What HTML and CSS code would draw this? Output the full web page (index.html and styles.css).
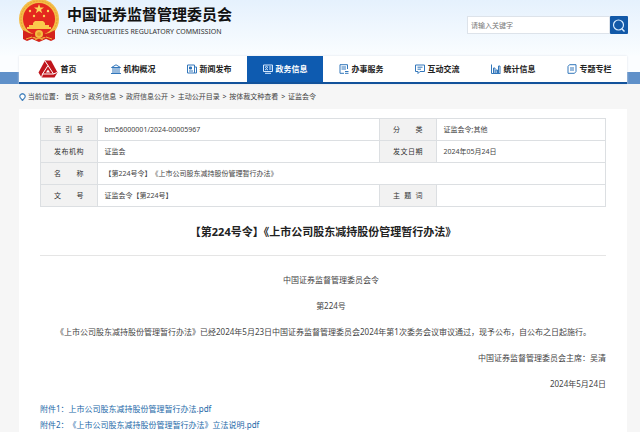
FILE: index.html
```
<!DOCTYPE html>
<html lang="zh-CN">
<head>
<meta charset="utf-8">
<meta name="viewport" content="width=device-width, initial-scale=1">
<title>中国证券监督管理委员会</title>
<link rel="stylesheet" href="styles.css">
</head>
<body>
<header class="site-header">
  <div class="brand">
    <svg class="emblem" viewBox="0 0 42 44" aria-hidden="true">
      <path d="M5 28 L5 39 L9 41 L14 39 L21 42 L28 39 L33 41 L37 39 L37 28 Z" fill="#d4231b"/>
      <circle cx="21" cy="19" r="20" fill="#f4bd48"/>
      <circle cx="21" cy="19" r="18" fill="none" stroke="#e6a233" stroke-width="1" stroke-dasharray="2 1"/>
      <circle cx="21" cy="19" r="16" fill="#e4281f"/>
      <path d="M21 4 L22.200 7.500 L26 7.500 L23 9.700 L24.200 13.300 L21 11.100 L17.800 13.300 L19 9.700 L16 7.500 L19.800 7.500 Z" fill="#fbd65a"/>
      <g fill="#fbd65a"><circle cx="12" cy="11" r="1.200"/><circle cx="30" cy="11" r="1.200"/><circle cx="16" cy="16" r="1.200"/><circle cx="26" cy="16" r="1.200"/></g>
      <path d="M15 23 L17 21 H25 L27 23 V25 H31 V27 H33 V29 H9 V27 H11 V25 H15 Z" fill="#fbc94c"/>
      <path d="M5 30 Q10 33 15 34 Q21 30 27 34 Q32 33 37 30 L36 37 Q30 39 26 37 L21 39 L16 37 Q12 39 6 37 Z" fill="#d4231b"/>
      <circle cx="21" cy="34" r="4" fill="#f4bd42"/><circle cx="21" cy="34" r="2" fill="#e39a2c"/>
      <path d="M8 39 L14 37 M34 39 L28 37 M17 40 L21 38 L25 40" stroke="#f2b63c" fill="none"/>
    </svg>
    <div class="brand-text">
      <h1 class="brand-name">中国证券监督管理委员会</h1>
      <p class="brand-en">CHINA SECURITIES REGULATORY COMMISSION</p>
    </div>
  </div>
  <form class="search">
    <input class="search-input" type="text" placeholder="请输入关键字" aria-label="请输入关键字">
    <button class="search-button" type="button" aria-label="搜索">
      <svg viewBox="0 0 18 18" aria-hidden="true"><circle cx="8.500" cy="9" r="5" fill="none" stroke="#d8ecff" stroke-width="1.200"/><path d="M12 13 L14.500 15.500" stroke="#d8ecff" stroke-width="1.400"/></svg>
    </button>
  </form>
</header>

<div class="nav-band">
  <nav class="nav">
    <a class="nav-item" href="#">
      <svg class="icon-home" viewBox="0 0 20 18" aria-hidden="true">
        <path d="M7 .5 H13 L19.500 12.500 L16.500 17.500 H3.500 L.5 12.500 Z" fill="#c0151c"/>
        <path d="M10 5.500 L15.500 14 H4.500 Z" fill="none" stroke="#fff" stroke-width="1"/>
        <path d="M10 9.500 L12 12.500 H8 Z" fill="#fff"/>
        <path d="M7 1 L10 5.500 M19 12.500 L15.500 14 M3.500 17.500 L4.500 14" stroke="#fff" stroke-width="1"/>
      </svg>
      首页</a>
    <a class="nav-item" href="#">
      <svg class="icon" viewBox="0 0 10 10" aria-hidden="true"><path d="M.5 3.500 L5 .8 L9.500 3.500 Z M0 9.500 H10 M2 4 V9 M4 4 V9 M6 4 V9 M8 4 V9"/></svg>
      机构概况</a>
    <a class="nav-item" href="#">
      <svg class="icon" viewBox="0 0 10 10" aria-hidden="true"><path d="M.5 1 H7.500 V9 H.5 Z M7.500 3 H9.500 V9 H7.500 M2 7 H6"/><path class="solid" d="M2.500 3 H4.500 V5 H2.500 Z"/></svg>
      新闻发布</a>
    <a class="nav-item nav-item-active" href="#" aria-current="page">
      <svg class="icon" viewBox="0 0 10 10" aria-hidden="true"><path d="M.5 1 H9.500 V7.500 H.5 Z M2 9.300 H8 M6 3 H8.500 M6 5 H8.500 M2 6 Q3.500 4 5 6"/><circle cx="3.500" cy="3.300" r="1"/></svg>
      政务信息</a>
    <a class="nav-item" href="#">
      <svg class="icon" viewBox="0 0 10 10" aria-hidden="true"><path d="M8.500 5 V.7 H1 V9.300 H5 M2.500 3 H7 M2.500 5 H7 M6 7.500 H9.500 M6 9.300 H9.500"/></svg>
      办事服务</a>
    <a class="nav-item" href="#">
      <svg class="icon" viewBox="0 0 10 10" aria-hidden="true"><path d="M.5 1 H9.500 V7.500 H5 L3 9.500 V7.500 H.5 Z M2.500 3.200 H7.500 M2.500 5.200 H6"/></svg>
      互动交流</a>
    <a class="nav-item" href="#">
      <svg class="icon" viewBox="0 0 10 10" aria-hidden="true"><path d="M.5 .5 V9.500 H9.500 M2.500 9 V4 H4 V9 M5 9 V6 H6.500 V9 M7.500 9 V2 H9 V9"/></svg>
      统计信息</a>
    <a class="nav-item" href="#">
      <svg class="icon" viewBox="0 0 10 10" aria-hidden="true"><path d="M2.500 .7 H9 V7.500 L7.500 9.300 H1 V2.500 Z M3 4 H7 M3 6 H7"/></svg>
      专题专栏</a>
  </nav>
</div>

<div class="crumbs">
  <svg class="pin" viewBox="0 0 7 8" aria-hidden="true"><path d="M3.500 7.500 L1.400 5 A2.600 2.600 0 1 1 5.600 5 Z" fill="#fff" stroke="#4a86bf" stroke-width="1.200"/></svg>
  <span>当前位置：</span>
  <a href="#">首页</a> <span class="sep">&gt;</span> <a href="#">政务信息</a> <span class="sep">&gt;</span> <a href="#">政府信息公开</a> <span class="sep">&gt;</span> <a href="#">主动公开目录</a> <span class="sep">&gt;</span> <a href="#">按体裁文种查看</a> <span class="sep">&gt;</span> <a href="#">证监会令</a>
</div>

<main class="panel">
  <table class="meta">
    <colgroup><col class="col-label"><col class="col-wide"><col class="col-label"><col class="col-value"></colgroup>
    <tr><th scope="row">索 引 号</th><td>bm56000001/2024-00005967</td><th scope="row">分 类</th><td>证监会令;其他</td></tr>
    <tr><th scope="row">发布机构</th><td>证监会</td><th scope="row">发文日期</th><td>2024年05月24日</td></tr>
    <tr><th scope="row">名 称</th><td colspan="3">【第224号令】《上市公司股东减持股份管理暂行办法》</td></tr>
    <tr><th scope="row">文 号</th><td>证监会令【第224号】</td><th scope="row">主 题 词</th><td></td></tr>
  </table>
  <article>
    <h2 class="title">【第224号令】《上市公司股东减持股份管理暂行办法》</h2>
    <div class="body">
      <p class="center">中国证券监督管理委员会令</p>
      <p class="center">第224号</p>
      <p>《上市公司股东减持股份管理暂行办法》已经2024年5月23日中国证券监督管理委员会2024年第1次委务会议审议通过，现予公布，自公布之日起施行。</p>
      <p class="right">中国证券监督管理委员会主席：吴清</p>
      <p class="right">2024年5月24日</p>
    </div>
    <ul class="files">
      <li><a href="#">附件1：上市公司股东减持股份管理暂行办法.pdf</a></li>
      <li><a href="#">附件2：《上市公司股东减持股份管理暂行办法》立法说明.pdf</a></li>
    </ul>
  </article>
</main>
</body>
</html>
```
FILE: styles.css
```
* { box-sizing: border-box; }

body {
  margin: 0;
  background: #f6f6f6;
  color: #444;
  font-family: "Noto Sans", "Noto Sans CJK SC", sans-serif;
  font-size: 8px;
  line-height: 16px;
  text-spacing-trim: space-all;
}

a { color: inherit; text-decoration: none; }
h1, h2, p, ul { margin: 0; padding: 0; }

.site-header {
  display: flex;
  justify-content: space-between;
  align-items: flex-start;
  height: 56px;
  padding: 0 12px 0 18px;
  background: linear-gradient(#e5f1fd, #fafdff);
}

.brand { display: flex; gap: 7px; }
.emblem { width: 42px; height: 44px; }
.brand-text { padding-top: 4px; }
.brand-name {
  color: #111;
  font-size: 15px;
  font-weight: 700;
  line-height: 21px;
}
.brand-en {
  color: #333;
  font-size: 7px;
  line-height: 14px;
  white-space: nowrap;
}

.search { display: flex; padding-top: 16px; }
.search-input {
  width: 143px;
  height: 18px;
  padding: 0 3px;
  border: 1px solid #dde3ea;
  background: #fff;
  font: inherit;
  font-size: 7px;
}
.search-input::placeholder { color: #777; }
.search-button {
  width: 18px;
  height: 18px;
  padding: 0;
  border: 0;
  border-radius: 1px;
  background: #1259a8;
}
.search-button svg { display: block; }

.nav-band {
  padding: 0 13px 0 19px;
  background: linear-gradient(#fbfdff 16px, #5f90c9 16px);
}
.nav {
  display: grid;
  grid-template-columns: repeat(8, 1fr);
  height: 28px;
  border-bottom: 2px solid #12529b;
  background: #fff;
  box-shadow: 0 0 2px #dce2e8;
}
.nav-item {
  display: flex;
  justify-content: center;
  align-items: center;
  gap: 3px;
  color: #222;
  font-weight: 700;
  white-space: nowrap;
}
.nav-item-active { background: #0e5bb0; color: #fff; }
.icon { width: 10px; height: 10px; fill: none; stroke: #3377bb; }
.icon .solid { fill: #3377bb; }
.nav-item-active .icon { stroke: #d5e9ff; }
.icon-home { width: 20px; height: 18px; }

.crumbs {
  height: 25px;
  padding: 0 19px;
  font-size: 7px;
  line-height: 25px;
  white-space: nowrap;
}
.pin { width: 7px; height: 8px; vertical-align: middle; }
.sep { margin: 0 1px; }

.panel {
  margin: 0 13px 0 19px;
  padding: 9px 21px 0;
  background: #fff;
}

.meta {
  width: 100%;
  table-layout: fixed;
  border-collapse: collapse;
  font-size: 7px;
}
.col-label { width: 10%; }
.col-wide { width: 50%; }
.col-value { width: 30%; }
.meta th, .meta td {
  height: 22px;
  border: 1px solid #dcdfe2;
  line-height: 14px;
}
.meta th {
  padding: 0 13px;
  background: #f2f2f2;
  color: #333;
  font-weight: 400;
  text-align-last: justify;
}
.meta td { padding: 0 7px; }

.title {
  padding: 15px 0 13px;
  border-bottom: 1px solid #e5e5e5;
  color: #222;
  font-size: 11px;
  font-weight: 700;
  line-height: 20px;
  text-align: center;
  text-spacing-trim: normal;
}

.body {
  display: grid;
  gap: 10px;
  padding-top: 16px;
}
.body p { text-indent: 2em; }
.center { text-align: center; }
.right { text-align: right; }

.files {
  padding-top: 9px;
  color: #2368a8;
  list-style: none;
}
```
